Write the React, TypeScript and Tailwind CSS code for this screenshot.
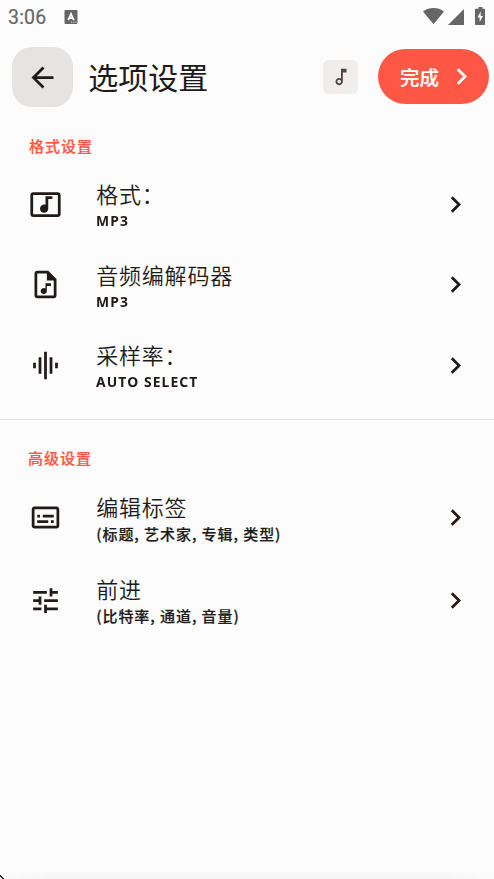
import type { ReactNode } from 'react';

const paths = {
  back: 'M20 11H7.83l5.59-5.59L12 4l-8 8 8 8 1.41-1.41L7.83 13H20v-2z',
  next: 'M10 6L8.59 7.41 13.17 12l-4.58 4.59L10 18l6-6z',
  note: 'M12 3v10.55c-.59-.34-1.27-.55-2-.55-2.21 0-4 1.79-4 4s1.79 4 4 4 4-1.79 4-4V7h4V3h-6zm-2 16c-1.1 0-2-.9-2-2s.9-2 2-2 2 .9 2 2-.9 2-2 2z',
  musicVideo:
    'M21 3H3c-1.1 0-2 .9-2 2v14c0 1.1.9 2 2 2h18c1.1 0 2-.9 2-2V5c0-1.1-.9-2-2-2zm0 16H3V5h18v14zM8 15c0-1.66 1.34-3 3-3 .35 0 .69.07 1 .18V6h5v2h-3v7.03c-.02 1.64-1.35 2.97-3 2.97-1.66 0-3-1.34-3-3z',
  audioFile:
    'M14 2H6c-1.1 0-2 .9-2 2v16c0 1.1.9 2 2 2h12c1.1 0 2-.9 2-2V8l-6-6zM18 20H6V4h7v5h5v11zM16 11h-4v3.88c-.36-.24-.79-.38-1.25-.38-1.24 0-2.25 1.01-2.25 2.25S9.51 19 10.75 19 13 17.99 13 16.75V13h3v-2z',
  wave: 'M7 18h2V6H7v12zm4 4h2V2h-2v20zm-8-8h2v-4H3v4zm12 4h2V6h-2v12zm4-8v4h2v-4h-2z',
  subtitles:
    'M20 4H4c-1.1 0-2 .9-2 2v12c0 1.1.9 2 2 2h16c1.1 0 2-.9 2-2V6c0-1.1-.9-2-2-2zm0 14H4V6h16v12zM6 10h2v2H6zm0 4h8v2H6zm10 0h2v2h-2zm-6-4h8v2h-8z',
  tune: 'M3 17v2h6v-2H3zM3 5v2h10V5H3zm10 16v-2h8v-2h-8v-2h-2v6h2zM7 9v2H3v2h4v2h2V9H7zm14 4v-2H11v2h10zm-6-4h2V7h4V5h-4V3h-2v6z',
};

function Icon({ name, className = 'size-[33px]' }: { name: keyof typeof paths; className?: string }) {
  return (
    <svg viewBox="0 0 24 24" fill="currentColor" fillRule="evenodd" className={`shrink-0 ${className}`}>
      <path d={paths[name]} />
    </svg>
  );
}

function Row({
  icon,
  title,
  sub,
  className = 'h-[81px]',
  iconClass = 'mt-[25px] size-[33px]',
  titleClass = 'h-[33px]',
  subClass = 'origin-left scale-x-[0.925] font-bold tracking-[1.2px]',
}: {
  icon: keyof typeof paths;
  title: string;
  sub: ReactNode;
  className?: string;
  iconClass?: string;
  titleClass?: string;
  subClass?: string;
}) {
  return (
    <div className={`flex items-start pr-[22px] pl-[28.5px] ${className}`}>
      <Icon name={icon} className={iconClass} />
      <div className="ml-[34.7px] flex-1 pt-[15px]">
        <div className={`text-[22px] leading-[32px] font-[350] tracking-[0.8px] whitespace-nowrap ${titleClass}`}>{title}</div>
        <div className={`h-[18px] text-[15px] leading-[18px] whitespace-nowrap ${subClass}`}>{sub}</div>
      </div>
      <Icon name="next" className={iconClass} />
    </div>
  );
}

const cjkSub = "font-['Noto_Sans_CJK_SC'] font-medium tracking-[0.94px] [-webkit-text-stroke:0.2px_#201a18]";

export default function App() {
  return (
    <div className="relative flex h-[879px] w-[494px] flex-col overflow-hidden bg-[#fcfcfc] font-['Noto_Sans','Noto_Sans_CJK_SC',sans-serif] text-[#201a18]">
      <div className="flex h-[34px] shrink-0 items-center pl-[8px] text-[#666]">
        <span className="w-[56px] pt-[1px] font-[Roboto] text-[19.5px] leading-[34px] tracking-[0.2px] [-webkit-text-stroke:0.2px_#666]">3:06</span>
        <svg width="14" height="16" viewBox="0 0 14 16">
          <rect x="0.5" y="1" width="13" height="14" rx="1" fill="#666" />
          <path d="M4.2 11.2L7 4.8l2.8 6.4M5.3 9.2h3.4" fill="none" stroke="#fff" strokeWidth="1.7" />
          <path d="M7 13.2h1.2M9.2 13.2h1.2M11.4 13.2h1.2" stroke="#ddd" strokeWidth="1" />
        </svg>
        <div className="flex-1" />
        <svg width="71" height="22" viewBox="0 0 71 22" fill="#666">
          <path d="M0 5.4C6 .9 15 .9 21 5.4L10.5 18.3z" />
          <path d="M41 3v16H25z" />
          <path d="M53 2.7h2.5V1h4v1.7H61c.6 0 1 .4 1 1V18c0 .6-.4 1-1 1h-8c-.6 0-1-.4-1-1V3.700c0-.6.4-1 1-1z" />
          <path d="M57.7 5.5l-3.2 6h2.1v4.5l3.4-6h-2.3z" fill="#fff" />
        </svg>
      </div>

      <header className="flex h-[86px] shrink-0 items-center pr-[5.5px] pl-[12px]">
        <button className="flex h-[60px] w-[61px] items-center justify-center rounded-[20px] bg-[#e5e4e2]">
          <Icon name="back" />
        </button>
        <h1 className="ml-[15.3px] flex-1 pt-[2px] text-[30px] leading-[44px] font-[370] whitespace-nowrap">选项设置</h1>
        <span className="flex h-[34px] w-[35px] items-center justify-center rounded-[6px] bg-[#efeeed] text-[#53433f]">
          <Icon name="note" className="size-[22px]" />
        </span>
        <button className="mb-[0.5px] ml-[20px] flex h-[55px] w-[110.5px] items-center rounded-full bg-[#ff5745] pl-[22px] text-white">
          <span className="w-[44.5px] pt-[1px] text-left text-[19.5px] font-medium whitespace-nowrap [-webkit-text-stroke:0.2px_white]">完成</span>
          <Icon name="next" />
        </button>
      </header>

      <section className="shrink-0">
        <h2 className="h-[43px] pt-[14px] pl-[29px] text-[15px] leading-[24px] font-medium tracking-[1px] text-[#ff5745] [-webkit-text-stroke:0.2px_#ff5745]">格式设置</h2>
        <Row icon="musicVideo" title="格式：" sub="MP3" />
        <Row icon="audioFile" title="音频编解码器" sub="MP3" className="h-[80px]" iconClass="mt-[24px] size-[33px]" />
        <Row icon="wave" title="采样率：" sub="AUTO SELECT" className="h-[95px]" />
      </section>
      <section className="shrink-0 border-t border-[#e0e0e0]">
        <h2 className="h-[57px] pt-[26px] pl-[28px] text-[15px] leading-[24px] font-medium tracking-[1px] text-[#ff5745] [-webkit-text-stroke:0.2px_#ff5745]">高级设置</h2>
        <Row icon="subtitles" title="编辑标签" sub="(标题, 艺术家, 专辑, 类型)" className="h-[82px]" iconClass="mt-[24px] size-[33px]" titleClass="-mt-px h-[34px]" subClass={cjkSub} />
        <Row icon="tune" title="前进" sub="(比特率, 通道, 音量)" titleClass="-mt-px h-[34px]" subClass={cjkSub} />
      </section>

      <div className="mt-auto h-[9px] shrink-0 bg-gradient-to-b from-[#fcfcfc] to-[#f4f4f4] [mask-image:linear-gradient(to_right,transparent,black_10%,black_90%,transparent)]" />
      <svg className="absolute bottom-0 left-0" width="5" height="4" viewBox="0 0 5 4">
        <path d="M0 0h1v1h1v1h1v1h1v1h-2v-1h-1v-1h-1z" fill="#222" />
      </svg>
    </div>
  );
}
